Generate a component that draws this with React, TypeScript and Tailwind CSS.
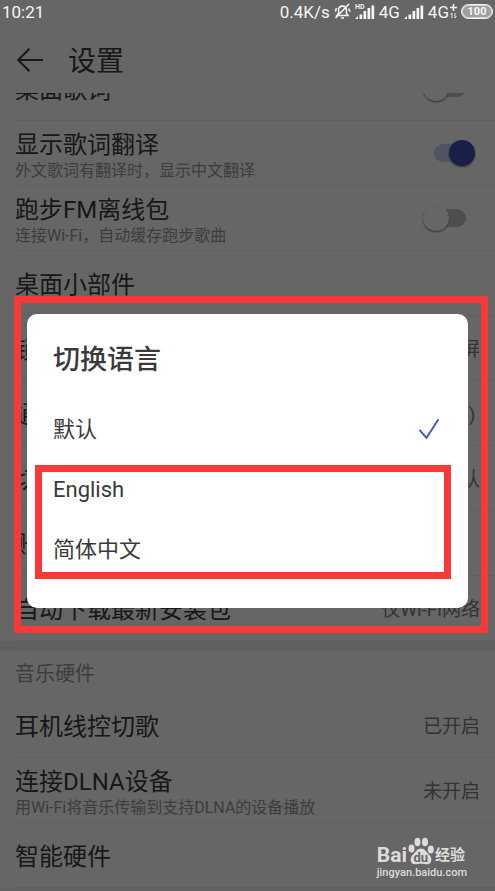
import clsx from 'clsx'
import React, { useState } from 'react'

type SettingRow = {
  title: string
  hint?: string
  value?: string
  toggle?: boolean
}

const general: SettingRow[] = [
  { title: '显示歌词翻译', hint: '外文歌词有翻译时，显示中文翻译', toggle: true },
  { title: '跑步FM离线包', hint: '连接Wi-Fi，自动缓存跑步歌曲', toggle: false },
  { title: '桌面小部件' },
  { title: '锁屏歌词', value: '音乐锁屏' },
  { title: '通知栏样式', value: '默认(系统)\u00a0' },
  { title: '切换语言', value: '默认' },
  { title: '账号管理' },
  { title: '自动下载最新安装包', value: '仅Wi-Fi网络' }
]

const hardware: SettingRow[] = [
  { title: '耳机线控切歌', value: '已开启' },
  { title: '连接DLNA设备', hint: '用Wi-Fi将音乐传输到支持DLNA的设备播放', value: '未开启' },
  { title: '智能硬件' }
]

function Signal({ hd }: { hd?: boolean }) {
  return (
    <svg width="20" height="17" viewBox="0 0 20 17" fill="currentColor">
      {hd && (
        <text x="0" y="6" fontSize="7" fontWeight="700" fontFamily="Roboto, sans-serif">
          HD
        </text>
      )}
      <path d="M0 16l3-3v3zM4.500 11.500h2.700V16H4.500zM8.500 8h2.700v8H8.500zM12.500 5h2.700v11h-2.700zM16.500 2.500h2.700V16h-2.700z" />
    </svg>
  )
}

function StatusBar() {
  return (
    <div className="relative z-20 flex h-[23px] items-center justify-between px-0.5 text-[17px] leading-5 text-neutral-100">
      <span>10:21</span>
      <div className="flex items-center gap-1">
        <span>0.4K/s</span>
        <svg width="17" height="17" viewBox="0 0 17 17" fill="none" stroke="currentColor" strokeWidth="1.600">
          <path d="M3 12.500h11l-1.600-2.300V7c0-2.300-1.600-3.900-3.900-3.900S4.600 4.700 4.600 7v3.200zM7 15h3M15 1 1.500 15M2.500 5 1.300 8.500M14.700 5.500l1.200 3.200" />
        </svg>
        <Signal hd />
        <span>4G</span>
        <Signal />
        <span className="flex items-center gap-px">
          4G
          <svg width="7" height="15" viewBox="0 0 7 15" fill="none" stroke="currentColor">
            <path d="M3.500 0v7M0 3.500h7" strokeWidth="1.600" />
            <path d="M2 14V9L.5 10.500M5 9v5l1.500-1.500" strokeWidth=".9" />
          </svg>
        </span>
        <span className="flex h-[15px] w-8 items-center justify-center rounded-full border-[1px] border-neutral-100 bg-neutral-100/40 text-[11px] font-bold ring-1 ring-inset ring-neutral-100/60">
          100
        </span>
      </div>
    </div>
  )
}

function Row({ title, hint, value, toggle }: SettingRow) {
  const [on, setOn] = useState(!!toggle)

  return (
    <label className="ml-[15px] flex h-[65px] shrink-0 items-center justify-between border-b border-[#ededed] pr-[15px]">
      <span className={clsx('flex flex-col', hint ? 'pt-1.5' : 'pt-1')}>
        <span className="text-2xl leading-[30px] text-[#3c3c3c]">{title}</span>
        {hint && <span className="text-base leading-[22px] text-[#989898]">{hint}</span>}
      </span>
      {value && <span className="pt-1 text-[19px] text-[#808080]">{value}</span>}
      {toggle !== undefined && (
        <input
          type="checkbox"
          role="switch"
          checked={on}
          onChange={() => setOn(!on)}
          className="relative mr-3.5 h-[18px] w-8 appearance-none rounded-full bg-[#c4c4c4] before:absolute before:-left-[11px] before:-top-1 before:size-[26px] before:rounded-full before:bg-white before:shadow-[0_1px_2px_#777] checked:bg-[#cdcff2] checked:before:left-[15px] checked:before:bg-[#3f51b5]"
        />
      )}
    </label>
  )
}

type OptionProps = {
  name: string
  selected: string
  onSelect: (name: string) => void
}

function Option({ name, selected, onSelect }: OptionProps) {
  return (
    <label className="flex h-[60px] items-center justify-between text-[22px] text-[#3a3a3a]">
      {name}
      <input
        type="radio"
        name="language"
        checked={selected === name}
        onChange={() => onSelect(name)}
        className="sr-only"
      />
      {selected === name && (
        <svg width="22" height="22" viewBox="0 0 22 22" fill="none" stroke="#4a5abb" strokeWidth="2">
          <path d="M1.500 11.800 8.500 19.800 20.500 1.200" />
        </svg>
      )}
    </label>
  )
}

function LanguageDialog() {
  const [language, setLanguage] = useState('默认')

  return (
    <div className="absolute inset-0 z-10 bg-black/60 pl-3.5 pr-[7px] pt-[296px]">
      <div className="border-[7px] border-[#fb3838] pb-[18px] pl-1.5 pr-[13px] pt-[11px]">
        <div role="dialog" aria-label="切换语言" className="rounded-[10px] bg-white pb-[29px] pt-6">
          <h2 className="pl-[26px] text-[27px] font-medium leading-[44px] text-[#3a3a3a]">切换语言</h2>
          <div className="pl-[26px] pr-7 pt-[17px]">
            <Option name="默认" selected={language} onSelect={setLanguage} />
          </div>
          <div className="ml-2 mr-[17px] mt-1.5 h-[114px] border-[7px] border-[#fb3838] pl-[11px] pr-1">
            <div className="-mt-[13px]">
              <Option name="English" selected={language} onSelect={setLanguage} />
              <Option name="简体中文" selected={language} onSelect={setLanguage} />
            </div>
          </div>
        </div>
      </div>
    </div>
  )
}

function Watermark() {
  return (
    <div className="absolute bottom-2.5 right-7 z-20 flex flex-col text-[#dcdcdc]">
      <div className="flex h-7 items-end gap-px">
        <span className="text-[21px] font-bold leading-5">Bai</span>
        <svg width="26" height="28" viewBox="0 0 26 28" fill="currentColor">
          <ellipse cx="3.500" cy="11.500" rx="3" ry="4" />
          <ellipse cx="9.500" cy="5" rx="3" ry="4.300" />
          <ellipse cx="17" cy="5" rx="3" ry="4.300" />
          <ellipse cx="22.800" cy="12.500" rx="3" ry="4" />
          <path d="M13 11.500c4 0 5 3.500 8 6 3.500 3 3.300 9.800-2 9.800-2.500 0-3.500-.5-6-.5s-3.500.5-6 .5c-5.300 0-5.500-6.800-2-9.800 3-2.500 4-6 8-6z" />
          <text x="5.500" y="25" fontSize="13" fontWeight="700" fill="#666" fontFamily="Roboto, sans-serif">
            du
          </text>
        </svg>
        <span className="text-[15px] font-bold leading-5">经验</span>
      </div>
      <span className="text-[11px] font-medium leading-4">jingyan.baidu.com</span>
    </div>
  )
}

export default function App() {
  return (
    <main className="relative min-h-screen overflow-hidden bg-white font-[Roboto,'Noto_Sans_CJK_SC',sans-serif]">
      <StatusBar />
      <header className="flex h-[70px] items-center gap-[25px] pl-[17px] pt-1 text-[#3c3c3c]">
        <button type="button" aria-label="返回">
          <svg width="26" height="24" viewBox="0 0 26 24" fill="none" stroke="currentColor" strokeWidth="2">
            <path d="M1 12h25M12.500.8 1.200 12l11.300 11.200" />
          </svg>
        </button>
        <h1 className="pt-1 text-[28px]">设置</h1>
      </header>
      {/* first row is scrolled halfway under the header */}
      <div className="flex h-7 flex-col justify-end overflow-hidden">
        <Row title="桌面歌词" toggle={false} />
      </div>
      {general.map((row) => (
        <Row key={row.title} {...row} />
      ))}
      <h2 className="border-t-[10px] border-[#efefef] pl-[15px] pt-1 text-xl leading-[38px] text-[#999]">
        音乐硬件
      </h2>
      {hardware.map((row) => (
        <Row key={row.title} {...row} />
      ))}
      <div className="h-[3px] bg-[#f4f4f4]" />
      <LanguageDialog />
      <Watermark />
    </main>
  )
}
